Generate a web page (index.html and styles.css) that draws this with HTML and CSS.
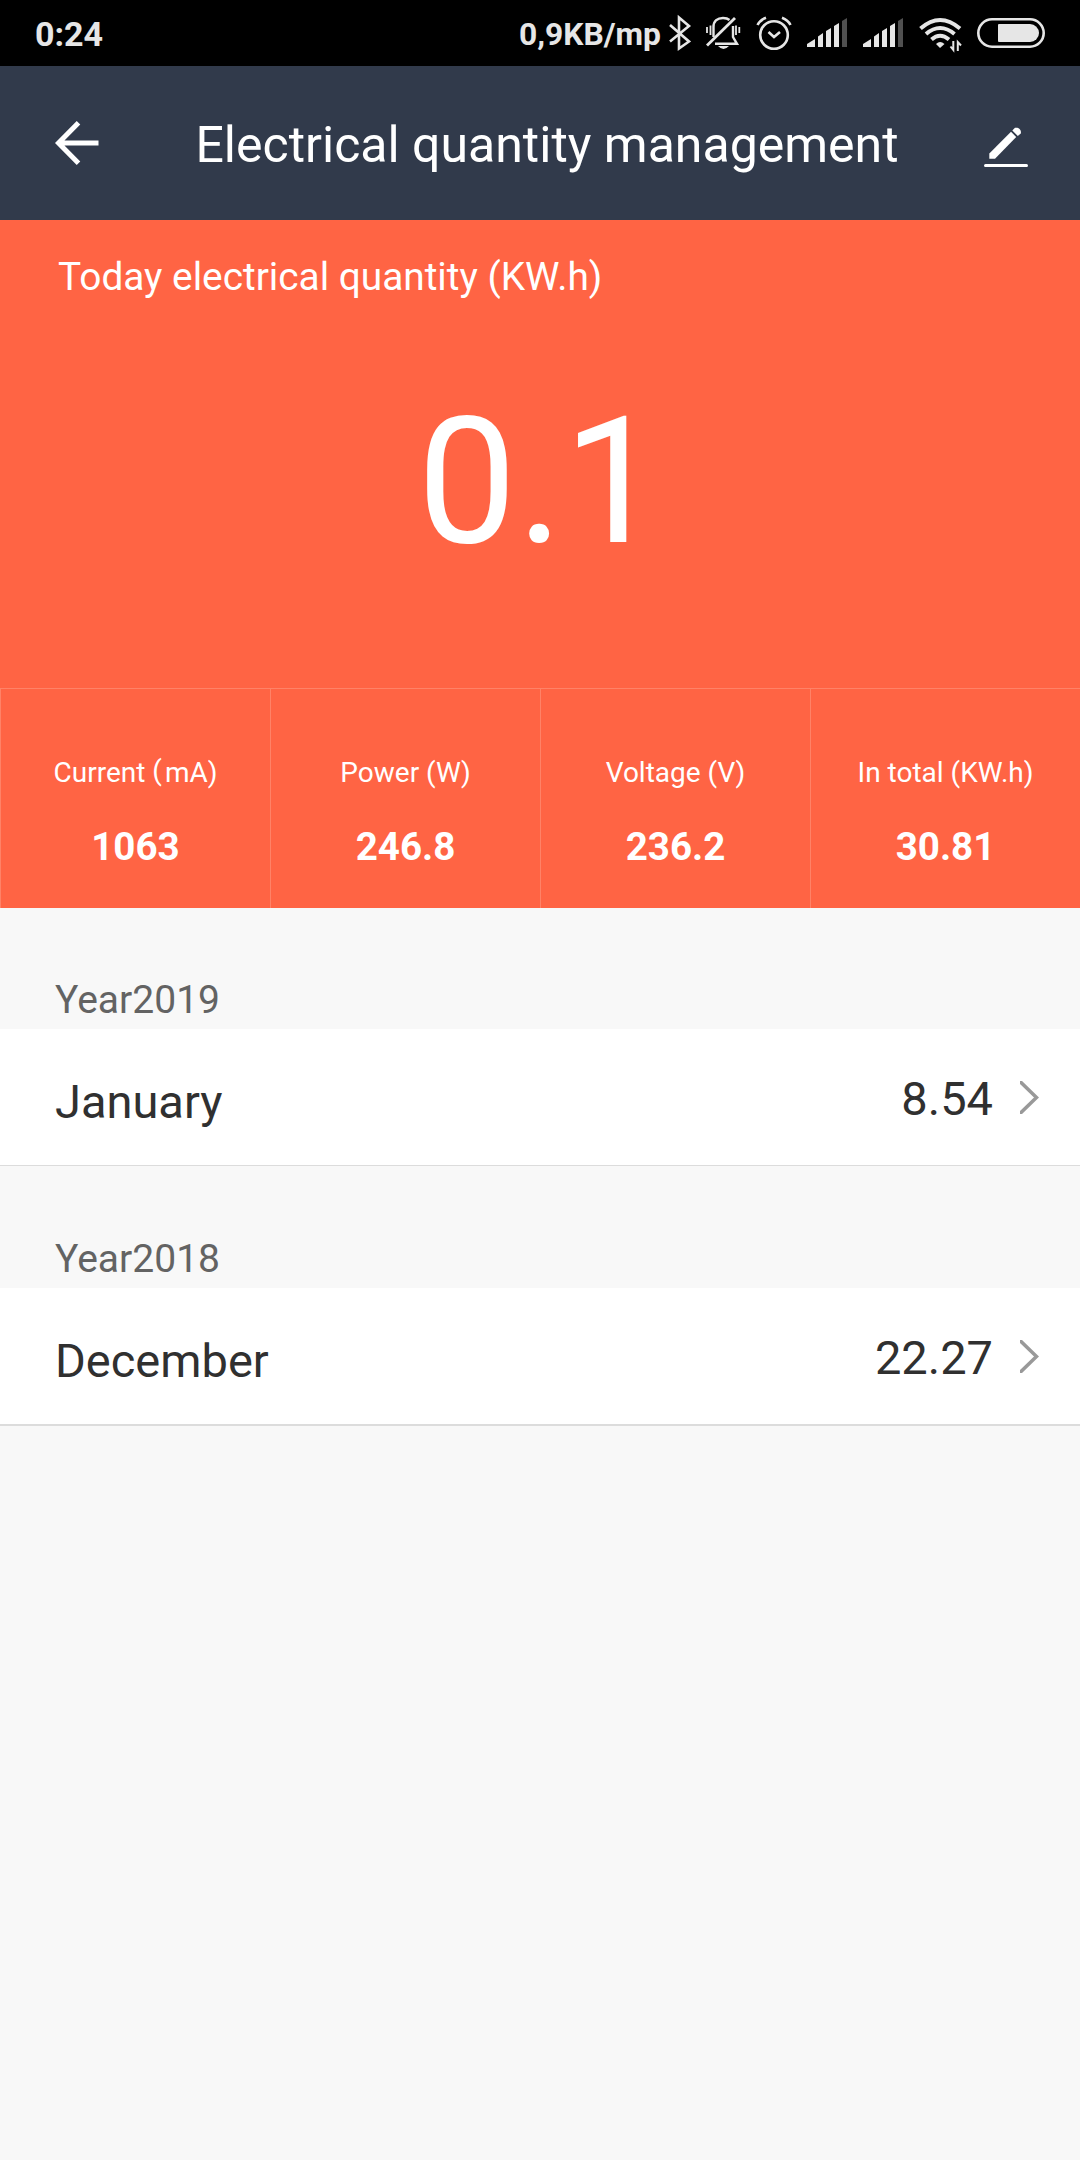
FILE: index.html
```html
<!DOCTYPE html>
<html lang="en">
<head>
  <meta charset="UTF-8">
  <title>Electrical quantity management</title>
  <link rel="stylesheet" href="styles.css">
</head>
<body>

  <!-- Phone status bar -->
  <div class="status-bar">
    <span class="clock">0:24</span>
    <div class="status-icons">
      <span class="net-speed">0,9KB/mp</span>
      <!-- bluetooth -->
      <svg class="icon-bluetooth" width="24" height="66" viewBox="668 0 24 66">
        <path d="M670 25L689 41.5L679 48.5V17.5L689 26L670 41.5" fill="none" stroke="#e6e6e6" stroke-width="2.6"/>
      </svg>
      <!-- muted bell -->
      <svg class="icon-bell" width="36" height="66" viewBox="705 0 36 66">
        <g fill="none" stroke="#e6e6e6" stroke-width="2.4">
          <path d="M713.5 37V27C713.5 21 717.5 18 723 18C726 18 728 18.7 729.5 20M733 26V37L737 43.8H715"/>
          <path d="M707 45.5L735 18" stroke-width="2.8"/>
          <path d="M707 27V33M710.5 25.500V35M736 25.500V35M739.3 27V33" stroke-width="1.8"/>
        </g>
        <path d="M718 46H729Q723.500 52 718 46Z" fill="#e6e6e6"/>
      </svg>
      <!-- alarm -->
      <svg class="icon-alarm" width="36" height="66" viewBox="756 0 36 66">
        <g fill="none" stroke="#e6e6e6" stroke-width="2.6">
          <circle cx="774" cy="35" r="13.8"/>
          <path d="M768.5 32L774 37L780 32"/>
          <path d="M757.500 25Q760 20 766 17.800M790.500 25Q788 20 782 17.800"/>
        </g>
      </svg>
      <!-- signal, sim 1 -->
      <svg class="icon-signal" width="40" height="66" viewBox="807 0 40 66">
        <path d="M807 47V44L815 39V47ZM818 47V36.500L823 33V47ZM826 47V31L831 28V47ZM834 47V26L839 23V47Z" fill="#e6e6e6"/>
        <path d="M842 47V21L847 18V47Z" fill="#505050"/>
      </svg>
      <!-- signal, sim 2 -->
      <svg class="icon-signal" width="40" height="66" viewBox="807 0 40 66">
        <path d="M807 47V44L815 39V47ZM818 47V36.500L823 33V47ZM826 47V31L831 28V47ZM834 47V26L839 23V47Z" fill="#e6e6e6"/>
        <path d="M842 47V21L847 18V47Z" fill="#505050"/>
      </svg>
      <!-- wifi -->
      <svg class="icon-wifi" width="44" height="66" viewBox="918 0 44 66">
        <g fill="none" stroke="#e6e6e6" stroke-width="4">
          <path d="M920.500 28.500Q940 11.500 960 28.500"/>
          <path d="M926 34Q940 22 954.500 34"/>
          <path d="M931.500 39.500Q940 32 949 39.500"/>
        </g>
        <path d="M936 44Q940 40 944.500 44L940 48Z" fill="#e6e6e6"/>
        <path d="M953.300 41V50L950.500 46.500M957.800 51V42L961 45.500" fill="none" stroke="#e6e6e6" stroke-width="2"/>
      </svg>
      <!-- battery -->
      <svg class="icon-battery" width="68" height="66" viewBox="977 0 68 66">
        <rect x="978.300" y="19.300" width="65.400" height="27.400" rx="13.700" fill="none" stroke="#e6e6e6" stroke-width="2.600"/>
        <path d="M999 24H1030A9 9 0 0 1 1030 42H999Q998 42 998 41V25Q998 24 999 24Z" fill="#e6e6e6"/>
      </svg>
    </div>
  </div>

  <!-- Title bar -->
  <div class="header">
    <svg class="back" width="44" height="44" viewBox="0 0 44 44">
      <path d="M23.500 1.800L3.500 22L23.500 42.200M3.500 22H43.500" fill="none" stroke="#fff" stroke-width="5"/>
    </svg>
    <h1>Electrical quantity management</h1>
    <svg class="edit" width="44" height="44" viewBox="0 0 44 44">
      <path d="M5.300 34.700V29.500L27 7.800L32.200 13L11 34.700Z" fill="#fff"/>
      <path d="M28.300 6.500L31 3.800A4.700 4.700 0 0 1 36.800 9.500L33.800 12Z" fill="#fff"/>
      <path d="M1.500 41.500H42.500" stroke="#fff" stroke-width="3" stroke-linecap="round"/>
    </svg>
  </div>

  <!-- Today -->
  <div class="today">
    <p class="today-label">Today electrical quantity (KW.h)</p>
    <p class="today-value">0.1</p>
  </div>

  <div class="stats">
    <div class="stat">
      <span class="stat-name">Current <span class="paren">(</span>mA)</span>
      <span class="stat-value">1063</span>
    </div>
    <div class="stat">
      <span class="stat-name">Power (W)</span>
      <span class="stat-value">246.8</span>
    </div>
    <div class="stat">
      <span class="stat-name">Voltage (V)</span>
      <span class="stat-value">236.2</span>
    </div>
    <div class="stat">
      <span class="stat-name">In total (KW.h)</span>
      <span class="stat-value">30.81</span>
    </div>
  </div>

  <!-- History by year -->
  <div class="year">Year2019</div>
  <div class="month">
    <span class="month-name">January</span>
    <span class="month-value">8.54</span>
    <svg class="chevron" width="19" height="33" viewBox="0 0 19 33">
      <path d="M-1 -0.500L16.500 16.500L-1 33.500" fill="none" stroke="#999" stroke-width="3.500"/>
    </svg>
  </div>

  <div class="year">Year2018</div>
  <div class="month last">
    <span class="month-name">December</span>
    <span class="month-value">22.27</span>
    <svg class="chevron" width="19" height="33" viewBox="0 0 19 33">
      <path d="M-1 -0.500L16.500 16.500L-1 33.500" fill="none" stroke="#999" stroke-width="3.500"/>
    </svg>
  </div>

</body>
</html>
```
FILE: styles.css
```css
* {
  box-sizing: border-box;
}

body {
  margin: 0;
  min-height: 2160px;
  background-color: #f8f8f8;
  font-family: Roboto, "Liberation Sans", sans-serif;
}

svg {
  display: block;
  flex: none;
}

.status-bar {
  display: flex;
  justify-content: space-between;
  height: 66px;
  padding: 0 35px 0 35px;
  background-color: #000;
  color: #e6e6e6;
  font-weight: bold;
}

.clock {
  font-size: 34px;
  line-height: 68px;
}

.status-icons {
  display: flex;
}

.net-speed {
  font-size: 31.8px;
  line-height: 68px;
  margin-right: 7px;
}

.icon-bluetooth {
  margin-right: 13px;
}

.icon-bell,
.icon-alarm {
  margin-right: 15px;
}

.icon-signal {
  margin-right: 16px;
}

.icon-signal + .icon-signal,
.icon-wifi {
  margin-right: 15px;
}

.header {
  display: flex;
  align-items: center;
  justify-content: space-between;
  height: 154px;
  padding: 0 52px 0 55px;
  background-color: #313a4b;
}

h1 {
  margin: 0;
  padding: 4px 0 0 11px;
  color: #fff;
  font-size: 50px;
  line-height: 60px;
  font-weight: normal;
}

.edit {
  margin-top: 6px;
}

.today {
  height: 468px;
  padding: 35px 58px 0;
  background-color: #ff6444;
  color: #fff;
}

.today p {
  margin: 0;
}

.today-label {
  font-size: 38.8px;
  line-height: 44px;
}

.today-value {
  padding-top: 79px;
  font-size: 177px;
  line-height: 208px;
  text-align: center;
}

.stats {
  display: flex;
  height: 220px;
  background-color: #ff6444;
  border-top: 1px solid #ff8267;
}

.stat {
  display: flex;
  flex-direction: column;
  align-items: center;
  width: 270px;
  padding-top: 67px;
  border-left: 1px solid #ff8267;
  color: #fff;
}

.stat-name {
  font-size: 28px;
  line-height: 34px;
}

.paren {
  position: relative;
  top: -2px;
  margin: 0 3px 0 0;
}

.stat-value {
  margin-top: 34px;
  font-size: 38.6px;
  line-height: 46px;
  font-weight: bold;
}

.year {
  height: 121px;
  padding: 69px 55px 0;
  color: #636363;
  font-size: 39px;
  line-height: 46px;
}

.month {
  display: flex;
  height: 137px;
  padding: 0 41px 0 55px;
  background-color: #fff;
  border-bottom: 1px solid #dcdcdc;
  color: #303030;
  font-size: 47px;
  line-height: 56px;
}

.month + .year {
  height: 122px;
  padding-top: 70px;
}

.month.last {
  height: 138px;
  border-bottom: 2px solid #dcdcdc;
}

.month-name {
  flex: 1;
  padding-top: 45px;
}

.month-value {
  padding-top: 42px;
}

.chevron {
  margin: 52px 0 0 27px;
}
```
